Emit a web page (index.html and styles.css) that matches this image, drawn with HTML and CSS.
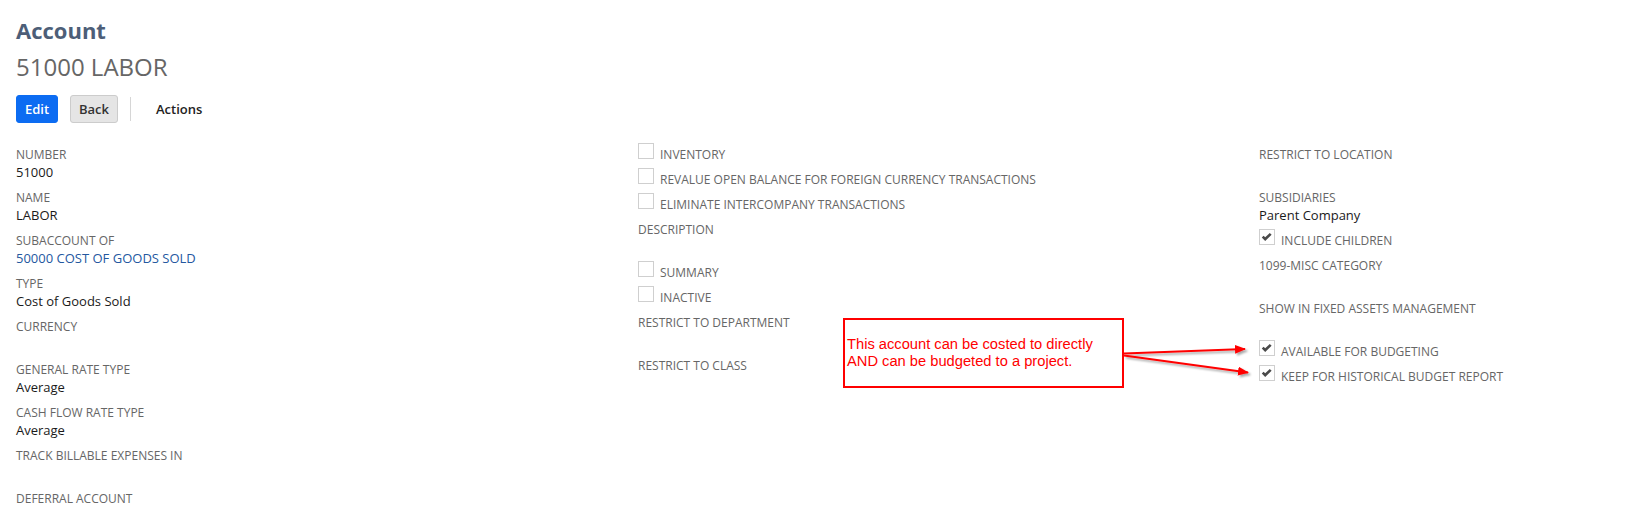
FILE: index.html
```html
<!DOCTYPE html>
<html>
<head>
<meta charset="utf-8">
<link rel="stylesheet" href="styles.css">
</head>
<body>
<div class="page">
  <header class="head">
    <h1 class="title">Account</h1>
    <h2 class="record">51000 LABOR</h2>
    <div class="toolbar">
      <button class="btn btn-primary">Edit</button>
      <button class="btn btn-secondary">Back</button>
      <span class="divider"></span>
      <button class="btn btn-menu">Actions</button>
    </div>
  </header>

  <main class="fields">
    <section class="col">
      <div class="field"><div class="label">NUMBER</div><div class="value">51000</div></div>
      <div class="field"><div class="label">NAME</div><div class="value">LABOR</div></div>
      <div class="field"><div class="label">SUBACCOUNT OF</div><div class="value"><a class="link" href="#">50000 COST OF GOODS SOLD</a></div></div>
      <div class="field"><div class="label">TYPE</div><div class="value">Cost of Goods Sold</div></div>
      <div class="field"><div class="label">CURRENCY</div><div class="value"></div></div>
      <div class="field"><div class="label">GENERAL RATE TYPE</div><div class="value">Average</div></div>
      <div class="field"><div class="label">CASH FLOW RATE TYPE</div><div class="value">Average</div></div>
      <div class="field"><div class="label">TRACK BILLABLE EXPENSES IN</div><div class="value"></div></div>
      <div class="field"><div class="label">DEFERRAL ACCOUNT</div><div class="value"></div></div>
    </section>

    <section class="col">
      <div class="check"><span class="box"></span><span class="check-label">INVENTORY</span></div>
      <div class="check"><span class="box"></span><span class="check-label">REVALUE OPEN BALANCE FOR FOREIGN CURRENCY TRANSACTIONS</span></div>
      <div class="check"><span class="box"></span><span class="check-label">ELIMINATE INTERCOMPANY TRANSACTIONS</span></div>
      <div class="field"><div class="label">DESCRIPTION</div><div class="value"></div></div>
      <div class="check"><span class="box"></span><span class="check-label">SUMMARY</span></div>
      <div class="check"><span class="box"></span><span class="check-label">INACTIVE</span></div>
      <div class="field"><div class="label">RESTRICT TO DEPARTMENT</div><div class="value"></div></div>
      <div class="field"><div class="label">RESTRICT TO CLASS</div><div class="value"></div></div>
    </section>

    <section class="col">
      <div class="field"><div class="label">RESTRICT TO LOCATION</div><div class="value"></div></div>
      <div class="field"><div class="label">SUBSIDIARIES</div><div class="value">Parent Company</div></div>
      <div class="check"><span class="box"><svg class="tick" viewBox="0 0 14 14"><path d="M1.8 7.4 L3.6 5.7 L5.2 7.3 L9.8 2.9 L11.6 4.7 L5.2 10.9 Z"/></svg></span><span class="check-label">INCLUDE CHILDREN</span></div>
      <div class="field"><div class="label">1099-MISC CATEGORY</div><div class="value"></div></div>
      <div class="field"><div class="label">SHOW IN FIXED ASSETS MANAGEMENT</div><div class="value"></div></div>
      <div class="check"><span class="box"><svg class="tick" viewBox="0 0 14 14"><path d="M1.8 7.4 L3.6 5.7 L5.2 7.3 L9.8 2.9 L11.6 4.7 L5.2 10.9 Z"/></svg></span><span class="check-label">AVAILABLE FOR BUDGETING</span></div>
      <div class="check"><span class="box"><svg class="tick" viewBox="0 0 14 14"><path d="M1.8 7.4 L3.6 5.7 L5.2 7.3 L9.8 2.9 L11.6 4.7 L5.2 10.9 Z"/></svg></span><span class="check-label">KEEP FOR HISTORICAL BUDGET REPORT</span></div>
    </section>
  </main>

  <div class="note">
    <p class="note-text">This account can be costed to directly<br>AND can be budgeted to a project.</p>
  </div>

  <svg class="arrows" width="1640" height="522" viewBox="0 0 1640 522">
    <defs>
      <marker id="ah" markerWidth="11" markerHeight="9" refX="10" refY="4.5" orient="auto" markerUnits="userSpaceOnUse">
        <path d="M0 0 L11 4.5 L0 9 Z" fill="#ff0000"/>
      </marker>
      <filter id="shadow" x="-5%" y="-50%" width="110%" height="200%">
        <feDropShadow dx="2" dy="2" stdDeviation="1.2" flood-color="#000" flood-opacity="0.35"/>
      </filter>
    </defs>
    <g filter="url(#shadow)">
      <line x1="1124" y1="353.5" x2="1245" y2="349" stroke="#ff0000" stroke-width="2" marker-end="url(#ah)"/>
      <line x1="1124" y1="355.5" x2="1248" y2="372.5" stroke="#ff0000" stroke-width="2" marker-end="url(#ah)"/>
    </g>
  </svg>
</div>
</body>
</html>
```

FILE: styles.css
```css
* { box-sizing: border-box; }

html, body {
  margin: 0;
  padding: 0;
  background: #ffffff;
}

body {
  font-family: "Open Sans", "Liberation Sans", Arial, sans-serif;
  color: #222;
}

.page {
  position: relative;
  width: 1640px;
  height: 522px;
  overflow: hidden;
  padding: 15px 0 0 16px;
}

.head {
  display: flex;
  flex-direction: column;
}

.title {
  margin: 0;
  font-size: 22px;
  line-height: 30px;
  font-weight: 700;
  color: #4d5e78;
}

.record {
  margin: 6px 0 0 0;
  font-size: 24px;
  line-height: 32px;
  font-weight: 400;
  color: #666666;
}

.toolbar {
  display: flex;
  align-items: center;
  margin-top: 12px;
  height: 28px;
}

.btn {
  font-family: "Open Sans", "Liberation Sans", Arial, sans-serif;
  font-size: 13px;
  height: 28px;
  line-height: 26px;
  border-radius: 3px;
  cursor: pointer;
}

.btn-primary {
  background: #0c6cf2;
  border: 1px solid #0c6cf2;
  color: #ffffff;
  font-weight: 600;
  padding: 0 8px;
  width: 42px;
}

.btn-secondary {
  margin-left: 12px;
  background: #e5e5e5;
  border: 1px solid #cccccc;
  color: #333333;
  font-weight: 600;
  padding: 0 8px;
  width: 48px;
}

.divider {
  width: 1px;
  height: 24px;
  background: #d6d6d6;
  margin-left: 12px;
}

.btn-menu {
  background: transparent;
  border: none;
  color: #222222;
  font-weight: 600;
  padding: 0 0 0 25px;
}

.fields {
  display: grid;
  grid-template-columns: 622px 621px 1fr;
  margin-top: 23px;
}

.col {
  display: flex;
  flex-direction: column;
}

.field {
  margin-bottom: 8px;
}

.label {
  font-size: 12px;
  line-height: 17px;
  height: 17px;
  color: #666666;
  white-space: nowrap;
}

.value {
  font-size: 13px;
  line-height: 18px;
  height: 18px;
  color: #1a1a1a;
  white-space: nowrap;
}

.link {
  color: #24589f;
  text-decoration: none;
}

.check {
  display: flex;
  align-items: flex-start;
  height: 18px;
  margin-bottom: 7px;
}

.box {
  flex: none;
  width: 16px;
  height: 16px;
  margin-top: -3px;
  border: 1px solid #cfcfcf;
  background: #ffffff;
  position: relative;
}

.tick {
  display: block;
  width: 14px;
  height: 14px;
  fill: #4a4a4a;
}

.check-label {
  margin-left: 6px;
  font-size: 12px;
  line-height: 18px;
  color: #666666;
  white-space: nowrap;
}

.note {
  position: absolute;
  left: 843px;
  top: 318px;
  width: 281px;
  height: 70px;
  border: 2px solid #ff0000;
  background: #ffffff;
  display: flex;
  align-items: center;
  padding: 0 2px;
}

.note-text {
  margin: 0;
  font-family: "Liberation Sans", Arial, sans-serif;
  font-size: 14.7px;
  line-height: 17px;
  color: #ff0000;
}

.arrows {
  position: absolute;
  left: 0;
  top: 0;
  pointer-events: none;
}
```
